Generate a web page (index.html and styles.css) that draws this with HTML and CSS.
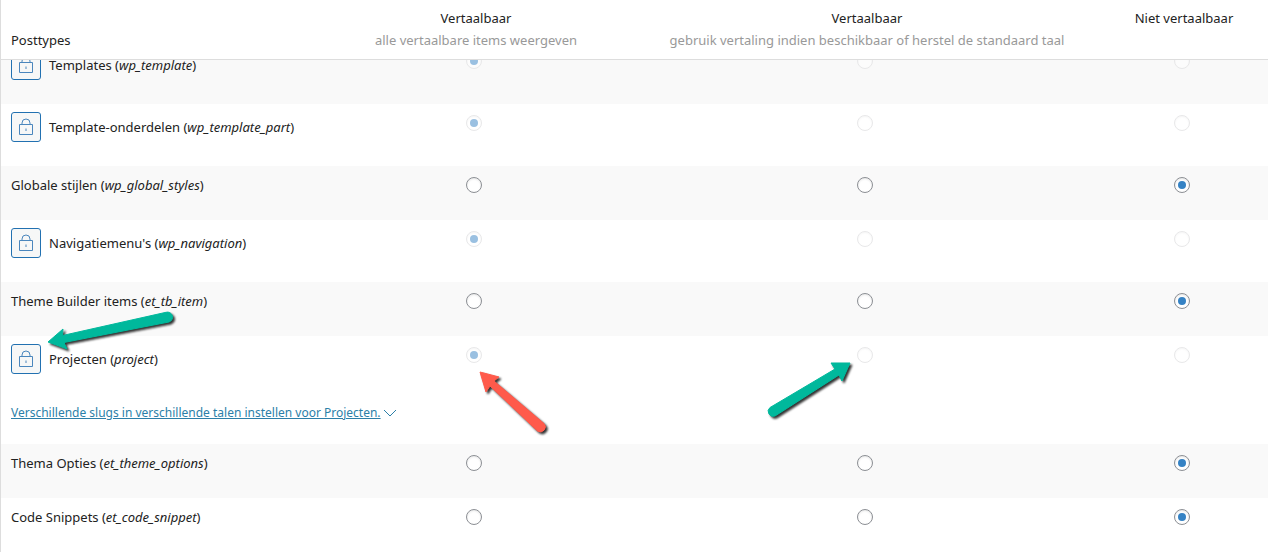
FILE: index.html
```html
<!DOCTYPE html>
<html lang="nl">

<head>
    <meta charset="UTF-8">
    <meta name="viewport" content="width=device-width, initial-scale=1.0">
    <title>Posttypes vertaling</title>
    <link rel="stylesheet" href="styles.css">
</head>

<body>
    <svg class="sprite" aria-hidden="true">
        <symbol id="lock" viewBox="0 0 16 18">
            <path d="M1.5 6.5h13v10h-13z" />
            <path d="M4 6.500V5a4 4 0 0 1 8 0v1.500" />
            <path d="M8 10.500v2.500" />
        </symbol>
    </svg>
    <table class="types">
        <thead class="types__head">
            <tr class="types__row">
                <th class="types__title" scope="col">Posttypes</th>
                <th scope="col">Vertaalbaar<span class="types__hint">alle vertaalbare items weergeven</span></th>
                <th scope="col">Vertaalbaar<span class="types__hint">gebruik vertaling indien beschikbaar of herstel de standaard taal</span></th>
                <th scope="col">Niet vertaalbaar</th>
            </tr>
        </thead>
        <tbody class="types__body">
            <tr class="types__row grey">
                <td class="types__name">
                    <button class="lock" type="button" aria-label="Ontgrendel Templates"><svg class="lock__icon"><use href="#lock" /></svg></button>
                    <span>Templates (<i>wp_template</i>)</span>
                </td>
                <td><input type="radio" name="wp_template" aria-label="Templates: vertaalbaar" checked disabled></td>
                <td><input type="radio" name="wp_template" aria-label="Templates: vertaalbaar, standaard taal" disabled></td>
                <td><input type="radio" name="wp_template" aria-label="Templates: niet vertaalbaar" disabled></td>
            </tr>
            <tr class="types__row">
                <td class="types__name">
                    <button class="lock" type="button" aria-label="Ontgrendel Template-onderdelen"><svg class="lock__icon"><use href="#lock" /></svg></button>
                    <span>Template-onderdelen (<i>wp_template_part</i>)</span>
                </td>
                <td><input type="radio" name="wp_template_part" aria-label="Template-onderdelen: vertaalbaar" checked disabled></td>
                <td><input type="radio" name="wp_template_part" aria-label="Template-onderdelen: vertaalbaar, standaard taal" disabled></td>
                <td><input type="radio" name="wp_template_part" aria-label="Template-onderdelen: niet vertaalbaar" disabled></td>
            </tr>
            <tr class="types__row grey">
                <td class="types__name"><span>Globale stijlen (<i>wp_global_styles</i>)</span></td>
                <td><input type="radio" name="wp_global_styles" aria-label="Globale stijlen: vertaalbaar"></td>
                <td><input type="radio" name="wp_global_styles" aria-label="Globale stijlen: vertaalbaar, standaard taal"></td>
                <td><input type="radio" name="wp_global_styles" aria-label="Globale stijlen: niet vertaalbaar" checked></td>
            </tr>
            <tr class="types__row">
                <td class="types__name">
                    <button class="lock" type="button" aria-label="Ontgrendel Navigatiemenu's"><svg class="lock__icon"><use href="#lock" /></svg></button>
                    <span>Navigatiemenu's (<i>wp_navigation</i>)</span>
                </td>
                <td><input type="radio" name="wp_navigation" aria-label="Navigatiemenu's: vertaalbaar" checked disabled></td>
                <td><input type="radio" name="wp_navigation" aria-label="Navigatiemenu's: vertaalbaar, standaard taal" disabled></td>
                <td><input type="radio" name="wp_navigation" aria-label="Navigatiemenu's: niet vertaalbaar" disabled></td>
            </tr>
            <tr class="types__row grey">
                <td class="types__name"><span>Theme Builder items (<i>et_tb_item</i>)</span></td>
                <td><input type="radio" name="et_tb_item" aria-label="Theme Builder items: vertaalbaar"></td>
                <td><input type="radio" name="et_tb_item" aria-label="Theme Builder items: vertaalbaar, standaard taal"></td>
                <td><input type="radio" name="et_tb_item" aria-label="Theme Builder items: niet vertaalbaar" checked></td>
            </tr>
            <tr class="types__row">
                <td class="types__name">
                    <button class="lock" type="button" aria-label="Ontgrendel Projecten"><svg class="lock__icon"><use href="#lock" /></svg></button>
                    <span>Projecten (<i>project</i>)</span>
                    <svg class="arrow arrow--lock" width="140" height="50" viewBox="0 0 140 50" aria-hidden="true">
                        <path d="M7 36L22 23L21.500 29.500L125 6.300A5 5 0 0 1 128 16L23 36.500L26 43Z" />
                    </svg>
                </td>
                <td>
                    <input type="radio" name="project" aria-label="Projecten: vertaalbaar" checked disabled>
                    <svg class="arrow arrow--current" width="90" height="75" viewBox="0 0 90 75" aria-hidden="true">
                        <path d="M10 6L29 11L24 15L74 57.500A5 5 0 0 1 67.500 65L20 20L16 26Z" />
                    </svg>
                </td>
                <td>
                    <input type="radio" name="project" aria-label="Projecten: vertaalbaar, standaard taal" disabled>
                    <svg class="arrow arrow--wanted" width="100" height="70" viewBox="0 0 100 70" aria-hidden="true">
                        <path d="M90 7L71 7L75 13L10 51.500A5 5 0 0 0 15 60L79 19L82 25Z" />
                    </svg>
                </td>
                <td><input type="radio" name="project" aria-label="Projecten: niet vertaalbaar" disabled></td>
            </tr>
            <tr class="types__row">
                <td class="types__slugs" colspan="4">
                    <a href="#">Verschillende slugs in verschillende talen instellen voor Projecten.</a>
                    <svg class="chevron" viewBox="0 0 14 8" aria-hidden="true"><path d="M1 1l6 6 6-6" /></svg>
                </td>
            </tr>
            <tr class="types__row grey">
                <td class="types__name"><span>Thema Opties (<i>et_theme_options</i>)</span></td>
                <td><input type="radio" name="et_theme_options" aria-label="Thema Opties: vertaalbaar"></td>
                <td><input type="radio" name="et_theme_options" aria-label="Thema Opties: vertaalbaar, standaard taal"></td>
                <td><input type="radio" name="et_theme_options" aria-label="Thema Opties: niet vertaalbaar" checked></td>
            </tr>
            <tr class="types__row">
                <td class="types__name"><span>Code Snippets (<i>et_code_snippet</i>)</span></td>
                <td><input type="radio" name="et_code_snippet" aria-label="Code Snippets: vertaalbaar"></td>
                <td><input type="radio" name="et_code_snippet" aria-label="Code Snippets: vertaalbaar, standaard taal"></td>
                <td><input type="radio" name="et_code_snippet" aria-label="Code Snippets: niet vertaalbaar" checked></td>
            </tr>
        </tbody>
    </table>
</body>

</html>
```
FILE: styles.css
```css
* {
    box-sizing: border-box;
}

body {
    margin: 0;
    background-color: #fff;
    color: #222;
    font-family: "Segoe UI", "Noto Sans", sans-serif;
    font-size: 13px;
    line-height: 22px;
}

.sprite {
    display: none;
}

.types {
    display: block;
    border-left: 1px solid #ddd;
    overflow: hidden;
}

.types__head {
    display: block;
    position: relative;
    z-index: 2;
    background-color: #fff;
    border-bottom: 1px solid #ddd;
}

/* list is scrolled a little under the header */
.types__body {
    display: block;
    margin-top: -18px;
}

.types__row {
    display: grid;
    grid-template-columns: 313fr 320fr 462fr 172fr;
}

.grey {
    background-color: #f9f9f9;
}

th {
    padding: 7px 10px 8px 14px;
    font-weight: 400;
    text-align: center;
    white-space: nowrap;
}

.types__title {
    align-self: end;
    padding-left: 10px;
    text-align: left;
}

.types__hint {
    display: block;
    color: #999;
}

td {
    position: relative;
    display: flex;
    justify-content: center;
    align-items: flex-start;
    padding: 8px 10px 24px;
}

.types__name {
    justify-content: flex-start;
    align-items: center;
    gap: 8px;
    white-space: nowrap;
}

.types__slugs {
    grid-column: 1 / -1;
    justify-content: flex-start;
    align-items: center;
    padding: 4px 10px 20px;
    font-size: 12px;
}

a {
    color: #2c7fa8;
}

.chevron {
    width: 14px;
    height: 8px;
    margin-left: 2px;
    fill: none;
    stroke: #2c7fa8;
}

.lock {
    display: flex;
    justify-content: center;
    align-items: center;
    width: 30px;
    height: 30px;
    padding: 0;
    border: 1px solid #2271b1;
    border-radius: 3px;
    background-color: #f6f7f7;
    cursor: pointer;
}

.lock__icon {
    width: 16px;
    height: 18px;
    fill: none;
    stroke: #4a86bd;
}

input[type="radio"] {
    appearance: none;
    display: grid;
    place-content: center;
    width: 16px;
    height: 16px;
    margin: 3px 0;
    border: 1px solid #8c8f94;
    border-radius: 50%;
    background-color: #fff;
    box-shadow: inset 0 1px 2px rgba(0, 0, 0, 0.1);
}

input[type="radio"]:checked::before {
    content: '';
    width: 8px;
    height: 8px;
    border-radius: 50%;
    background-color: #3582c4;
}

input[type="radio"]:disabled {
    border-color: #e8e8e9;
    background-color: rgba(255, 255, 255, 0.5);
    box-shadow: inset 0 1px 2px rgba(0, 0, 0, 0.04);
}

input[type="radio"]:disabled:checked::before {
    background-color: #9ac0e1;
}

.arrow {
    position: absolute;
    z-index: 1;
    fill: #00b89c;
    stroke: #00b89c;
    stroke-linejoin: round;
    overflow: visible;
    filter: drop-shadow(2px 2px 1px rgba(0, 0, 0, 0.8));
    pointer-events: none;
}

.arrow--lock {
    top: -30px;
    left: 40px;
}

.arrow--current {
    top: 30px;
    left: calc(50% - 4px);
    fill: #ff5a4b;
    stroke: #ff5a4b;
}

.arrow--wanted {
    top: 20px;
    left: calc(50% - 105px);
}
```
